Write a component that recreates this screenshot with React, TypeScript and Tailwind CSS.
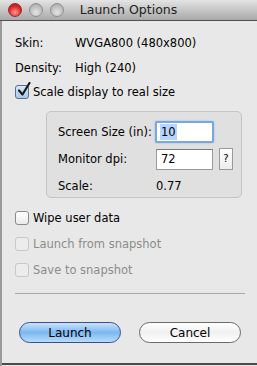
import React from "react"

const font = { fontFamily: '"DejaVu Sans", "Lucida Grande", sans-serif' }

function Check({ checked, disabled }: { checked?: boolean; disabled?: boolean }) {
  return (
    <div
      className={
        "relative w-[14px] h-[14px] rounded-[3px] border shrink-0 " +
        (disabled
          ? "border-[#c8c8c8] bg-[#ececec]"
          : checked
          ? "border-[#5a6f8e] bg-gradient-to-b from-[#d8e8f8] to-[#a8c8ea]"
          : "border-[#8a8a8a] bg-gradient-to-b from-[#ffffff] to-[#eaeaea]")
      }
    >
      {checked && (
        <svg className="absolute left-[1px] top-[-4px]" width="14" height="15" viewBox="0 0 14 15">
          <path d="M2 8.5 L5.5 12.5 L12.5 1" stroke="#1a1a1a" strokeWidth="2.2" fill="none" strokeLinecap="round" strokeLinejoin="round" />
        </svg>
      )}
    </div>
  )
}

function Light({ red }: { red?: boolean }) {
  return (
    <div
      className={
        "w-[14px] h-[14px] rounded-full border " +
        (red
          ? "border-[#9a2a2a] bg-[radial-gradient(circle_at_50%_70%,#ff9a9a,#e02a2a_55%,#a01010)]"
          : "border-[#8f8f8f] bg-[radial-gradient(circle_at_50%_70%,#e4e4e4,#bdbdbd_60%,#9e9e9e)]")
      }
    />
  )
}

export default function App() {
  return (
    <div className="w-[257px] h-[366px] bg-[#e8e8e8] text-[11.5px] leading-[16px] text-black overflow-hidden flex flex-col" style={font}>
      {/* title bar */}
      <div className="h-[21px] shrink-0 bg-gradient-to-b from-[#e4e4e4] to-[#a9a9a9] border-b border-[#505050] flex items-center relative">
        <div className="flex gap-[7px] pl-[8px]">
          <Light red />
          <Light />
          <Light />
        </div>
        <div className="absolute left-0 right-0 top-[2px] text-center text-[12.5px] text-[#222]">Launch Options</div>
      </div>

      <div className="flex-1 border-l-2 border-[#9a9a9a] flex flex-col">
        <div className="pl-[13px] pr-[12px] flex flex-col">
          <div className="flex mt-[14px] h-[16px] items-center">
            <span className="w-[60px]">Skin:</span>
            <span>WVGA800 (480x800)</span>
          </div>
          <div className="flex mt-[9px] h-[16px] items-center">
            <span className="w-[60px]">Density:</span>
            <span>High (240)</span>
          </div>
          <div className="flex items-center gap-[4px] mt-[8px] h-[16px]">
            <Check checked />
            <span>Scale display to real size</span>
          </div>

          {/* group box */}
          <div className="ml-[31px] mt-[11px] h-[87px] w-[196px] rounded-[5px] border border-[#c4c4c4] bg-[#e0e0e0] pl-[11px] pt-[9px]">
            <div className="flex items-center h-[22px]">
              <span className="w-[97px]">Screen Size (in):</span>
              <div className="w-[59px] h-[22px] rounded-[2px] border-2 border-[#79a7e0] shadow-[0_0_2px_#8fb8ea] bg-white flex items-center pl-[3px]">
                <span className="bg-[#b5d5ff] px-[1px]">10</span>
              </div>
            </div>
            <div className="flex items-center h-[22px] mt-[5px]">
              <span className="w-[98px]">Monitor dpi:</span>
              <div className="w-[57px] h-[21px] border border-[#9a9a9a] border-t-[#7a7a7a] bg-white flex items-center pl-[4px]">72</div>
              <div className="ml-[6px] w-[14px] h-[22px] border border-[#9a9a9a] bg-gradient-to-b from-white to-[#ececec] flex items-center justify-center text-[10px]">?</div>
            </div>
            <div className="flex items-center h-[16px] mt-[8px]">
              <span className="w-[98px]">Scale:</span>
              <span>0.77</span>
            </div>
          </div>

          <div className="flex items-center gap-[4px] mt-[12px] h-[16px]">
            <Check />
            <span>Wipe user data</span>
          </div>
          <div className="flex items-center gap-[4px] mt-[10px] h-[16px] text-[#8c8c8c]">
            <Check disabled />
            <span>Launch from snapshot</span>
          </div>
          <div className="flex items-center gap-[4px] mt-[10px] h-[16px] text-[#8c8c8c]">
            <Check disabled />
            <span>Save to snapshot</span>
          </div>
          <div className="mt-[15px] border-t border-[#a8a8a8]" />
        </div>

        <div className="flex gap-[18px] pl-[17px] mt-[28px]">
          <div className="w-[102px] h-[21px] rounded-full border border-[#3a4f8a] bg-gradient-to-b from-[#c8e2fb] via-[#7cb8f0] to-[#b8dcfb] flex items-center justify-center text-[12px]">
            Launch
          </div>
          <div className="w-[102px] h-[21px] rounded-full border border-[#6a6a6a] bg-gradient-to-b from-white via-[#f0f0f0] to-[#ffffff] flex items-center justify-center text-[12px]">
            Cancel
          </div>
        </div>
        <div className="flex-1" />
        <div className="h-[2px] bg-[#4a4a4a] mb-[1px]" />
      </div>
    </div>
  )
}
